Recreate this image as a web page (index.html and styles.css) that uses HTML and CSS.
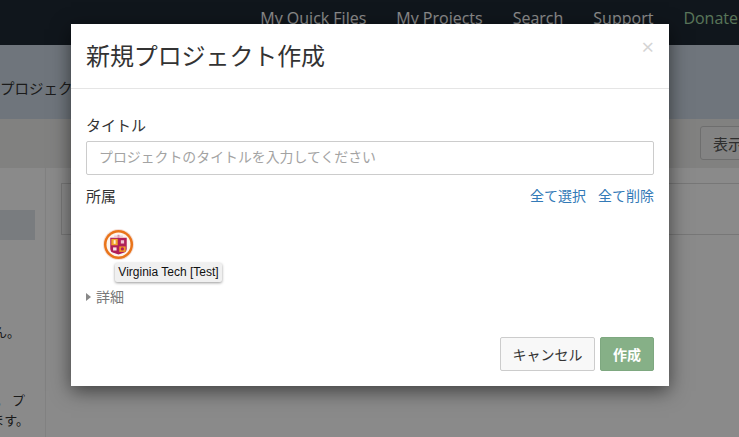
FILE: index.html
```html
<!DOCTYPE html>
<html lang="ja">
<head>
<meta charset="utf-8">
<title>新規プロジェクト作成</title>
<link rel="stylesheet" href="styles.css">
</head>
<body>
<div class="page">
  <nav class="nav">
    <a class="nav-link">My Quick Files</a>
    <a class="nav-link">My Projects</a>
    <a class="nav-link">Search</a>
    <a class="nav-link">Support</a>
    <a class="nav-link nav-donate">Donate</a>
  </nav>
  <div class="band-title">プロジェクト</div>
  <div class="band-tools"><button class="tool-btn">表示</button></div>
  <div class="main">
    <aside class="side">
      <div class="side-active"></div>
      <p class="side-text side-text-a">ありません。</p>
      <p class="side-text side-text-b">できます。 プ</p>
      <p class="side-text side-text-c">表示されます。</p>
    </aside>
    <section class="content"><div class="content-box"></div></section>
  </div>
</div>
<div class="backdrop"></div>
<div class="modal">
  <header class="modal-header">
    <h3 class="modal-title">新規プロジェクト作成</h3>
    <span class="modal-close">×</span>
  </header>
  <div class="modal-body">
    <label class="field-label">タイトル</label>
    <input class="field-input" type="text" placeholder="プロジェクトのタイトルを入力してください">
    <div class="aff-row">
      <span class="aff-label">所属</span>
      <span class="aff-links"><a class="aff-link">全て選択</a><a class="aff-link">全て削除</a></span>
    </div>
    <div class="aff-logo">
      <svg width="31" height="31" viewBox="0 0 32 32">
        <circle cx="16" cy="16" r="16" fill="#f5dfd6"/>
        <circle cx="16" cy="16" r="15" fill="#e9741a"/>
        <circle cx="16" cy="16" r="12.4" fill="#fdf5ee"/>
        <path d="M7.5 9h17v11q0 3.6-3.2 4.6l-5.3 1.6-5.3-1.6q-3.2-1-3.2-4.6z" fill="#b01f58"/>
        <rect x="8.6" y="10.2" width="6.6" height="6.6" fill="#f2a52a"/>
        <rect x="16.8" y="18" width="6.6" height="5.6" fill="#f29a25"/>
        <rect x="11" y="11.5" width="2" height="3.8" fill="#fff0d8"/>
        <rect x="18.4" y="11.6" width="3.4" height="3.4" fill="#eec2d0"/>
        <rect x="10.4" y="19" width="3.6" height="3.2" fill="#fae3ea"/>
        <circle cx="20" cy="20.6" r="1.7" fill="#b01f58"/>
        <rect x="15" y="6" width="2" height="3" fill="#d17f9b"/>
        <path d="M11.5 7.4h9" stroke="#e9b3c4" stroke-width="1"/>
      </svg>
    </div>
    <div class="details"><span class="caret"></span>詳細</div>
  </div>
  <footer class="modal-footer">
    <button class="btn btn-default">キャンセル</button>
    <button class="btn btn-success">作成</button>
  </footer>
  <div class="tooltip">Virginia Tech [Test]</div>
</div>
</body>
</html>
```
FILE: styles.css
```css
* { box-sizing: border-box; }
html, body { margin: 0; height: 100%; overflow: hidden; }
body {
  background: #fff;
  color: #333;
  font-family: "Open Sans", "Noto Sans CJK JP", sans-serif;
  font-size: 14px;
}
.page { display: flex; flex-direction: column; height: 437px; }
.nav {
  height: 45px;
  background: #1f2a35;
  display: flex;
  justify-content: flex-end;
  gap: 30px;
  padding: 6px 1px 0 0;
  flex: none;
}
.nav-link { color: #fff; font-size: 16px; line-height: 24px; }
.nav-donate { color: #a4d8a4; }
.band-title {
  height: 74px;
  flex: none;
  background: #ced9e5;
  color: #333;
  font-size: 14.5px;
  line-height: 88px;
  padding-left: 0;
  overflow: hidden;
  white-space: nowrap;
}
.band-tools {
  height: 49px;
  flex: none;
  background: #eeeeec;
  display: flex;
  padding: 7px 0 0 700px;
}
.tool-btn {
  width: 80px;
  height: 34px;
  flex: none;
  background: #f2f2f2;
  border: 1px solid #ccc;
  border-radius: 3px;
  color: #555;
  font: inherit;
  font-size: 15px;
  text-align: left;
  padding: 0 0 0 12px;
}
.main { flex: 1; display: flex; min-height: 0; }
.side {
  width: 46px;
  flex: none;
  border-right: 1px solid #eee;
  overflow: hidden;
  padding-top: 42px;
}
.side-active { width: 35px; height: 30px; background: #dfe5ea; }
.side-text {
  margin: 0;
  display: flex;
  justify-content: flex-end;
  white-space: pre;
  font-size: 13px;
  line-height: 20px;
  color: #333;
}
.side-text-a { margin-top: 82px; padding-right: 25px; }
.side-text-b { margin-top: 48px; padding-right: 20px; }
.side-text-c { margin-top: 0; padding-right: 16px; }
.content { flex: 1; padding: 15px 0 0 15px; min-width: 0; }
.content-box { height: 52px; border: 1px solid #ddd; border-right: 0; }
.backdrop {
  position: absolute;
  inset: 0;
  background: rgba(0, 0, 0, .46);
}
.modal {
  position: absolute;
  left: 71px;
  top: 24px;
  width: 598px;
  height: 362px;
  background: #fff;
  display: flex;
  flex-direction: column;
  box-shadow: 0 5px 18px rgba(0, 0, 0, .55);
}
.modal-header {
  height: 65px;
  flex: none;
  border-bottom: 1px solid #e5e5e5;
  padding: 14px 15px 0;
  display: flex;
  justify-content: space-between;
}
.modal-title { margin: 0; font-size: 24px; font-weight: 400; line-height: 36px; color: #333; letter-spacing: -.1px; }
.modal-close { color: #d4d4d4; font-size: 22px; font-weight: 400; line-height: 18px; margin-top: -1px; }
.modal-body { flex: 1; padding: 24px 15px 0; }
.field-label { display: block; font-size: 15px; line-height: 24px; height: 28px; color: #333; }
.field-input {
  display: block;
  width: 100%;
  height: 34px;
  border: 1px solid #ccc;
  border-radius: 2px;
  padding: 0 12px 3px;
  font: inherit;
  font-size: 13.9px;
  color: #333;
}
.field-input::placeholder { color: #a3a3a3; opacity: 1; }
.aff-row { display: flex; justify-content: space-between; margin-top: 10px; line-height: 22px; }
.aff-label { font-size: 15px; color: #333; }
.aff-links { display: flex; gap: 12px; font-size: 14px; }
.aff-link { color: #337ab7; }
.aff-logo { height: 31px; margin: 22px 0 0 17px; }
.aff-logo svg { display: block; }
.details { margin-top: 27px; font-size: 14px; line-height: 20px; color: #777; display: flex; align-items: center; }
.caret {
  width: 0;
  height: 0;
  border-left: 5px solid #888;
  border-top: 4.5px solid transparent;
  border-bottom: 4.5px solid transparent;
  margin-right: 5px;
}
.modal-footer { flex: none; height: 49px; display: flex; justify-content: flex-end; gap: 5px; padding: 0 15px; }
.btn { height: 34px; border-radius: 2px; font: inherit; font-size: 14px; padding: 0; }
.btn-default { width: 95px; background: #f8f8f8; border: 1px solid #ccc; color: #333; }
.btn-success { width: 54px; background: #86b087; border: 1px solid #7ea880; color: #fff; font-weight: 700; }
.tooltip {
  position: absolute;
  left: 44px;
  top: 239px;
  width: 107px;
  height: 19px;
  background: #f0f0f0;
  border-radius: 2px;
  box-shadow: 0 1px 3px rgba(0, 0, 0, .4);
  font-family: "Liberation Sans", sans-serif;
  font-size: 12px;
  line-height: 19px;
  text-align: center;
  color: #111;
  white-space: nowrap;
}
```
